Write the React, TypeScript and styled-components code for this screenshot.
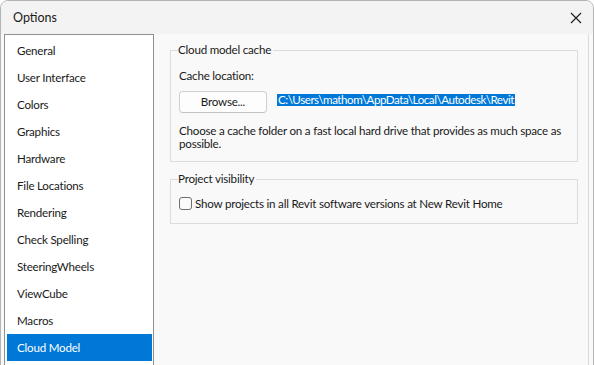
import React from "react";
import styled, { createGlobalStyle } from "styled-components";

const Global = createGlobalStyle`
  html, body { margin: 0; padding: 0; background: #ffffff; }
  body { font-family: "Segoe UI", Lato, "Noto Sans", sans-serif; }
  #root { width: 594px; height: 365px; overflow: hidden; }
`;

const Window = styled.div`
  box-sizing: border-box;
  width: 594px;
  height: 375px;
  border: 1px solid #b4b4b4;
  border-radius: 8px 8px 0 0;
  background: #f9f9f9;
  display: flex;
  flex-direction: column;
  overflow: hidden;
  font-size: 11.6px;
  letter-spacing: -0.22px;
  color: #1a1a1a;
`;

const TitleBar = styled.div`
  height: 33px;
  flex: none;
  background: #f3f3f3;
  display: flex;
  align-items: center;
  justify-content: space-between;
  padding: 0 10px 0 12px;
  font-size: 12.5px;
  letter-spacing: 0;
  color: #1b1b1b;
`;

const CloseButton = styled.div`
  width: 14px;
  height: 14px;
  display: flex;
  align-items: center;
  justify-content: center;
`;

const Body = styled.div`
  flex: 1;
  display: flex;
  padding: 0 4px 0 3px;
  gap: 4px;
`;

const ListBox = styled.div`
  box-sizing: border-box;
  width: 150px;
  flex: none;
  background: #ffffff;
  border: 1px solid #8f8f8f;
  padding: 2px 1px 0 2px;
  display: flex;
  flex-direction: column;
`;

const ListItem = styled.div<{ $selected?: boolean }>`
  height: 27px;
  display: flex;
  align-items: center;
  padding-left: 10px;
  background: ${(p) => (p.$selected ? "#0078d7" : "transparent")};
  color: ${(p) => (p.$selected ? "#ffffff" : "#1a1a1a")};
`;

const Panel = styled.div`
  flex: 1;
  border-right: 1px solid #dadada;
  padding: 8px 10px 0 12px;
  display: flex;
  flex-direction: column;
  gap: 9px;
`;

const Group = styled.fieldset<{ $bottom: number }>`
  margin: 0;
  min-width: 0;
  border: 1px solid #dcdcdc;
  border-radius: 0;
  padding: 0 8px ${(p) => p.$bottom}px 8px;
  display: flex;
  flex-direction: column;
`;

const Legend = styled.legend`
  padding: 0 2px 0 0;
  margin-left: -1px;
  line-height: 16px;
`;

const Label = styled.div`
  line-height: 15px;
  margin-top: 10px;
`;

const BrowseRow = styled.div`
  display: flex;
  align-items: center;
  gap: 10px;
  margin-top: 8px;
`;

const Button = styled.div`
  box-sizing: border-box;
  width: 88px;
  height: 22px;
  border: 1px solid #d0d0d0;
  border-bottom-color: #c2c2c2;
  border-radius: 4px;
  background: #fdfdfd;
  display: flex;
  align-items: center;
  justify-content: center;
  line-height: 1;
`;

const PathText = styled.span`
  background: #0078d7;
  color: #ffffff;
  line-height: 12px;
  letter-spacing: -0.46px;
  padding: 0 1px;
  margin-top: -4px;
`;

const Description = styled.div`
  margin-top: 11px;
  line-height: 13px;
`;

const CheckRow = styled.label`
  display: flex;
  align-items: center;
  gap: 3px;
  margin-top: 9px;
  line-height: 15px;
`;

const CheckBox = styled.span`
  box-sizing: border-box;
  width: 13px;
  height: 13px;
  border: 1px solid #6e6e6e;
  border-radius: 3px;
  background: #fbfbfb;
`;

const items = [
  "General",
  "User Interface",
  "Colors",
  "Graphics",
  "Hardware",
  "File Locations",
  "Rendering",
  "Check Spelling",
  "SteeringWheels",
  "ViewCube",
  "Macros",
  "Cloud Model",
];

export default function App() {
  return (
    <>
      <Global />
      <Window>
        <TitleBar>
          <span>Options</span>
          <CloseButton>
            <svg width="12" height="12" viewBox="0 0 12 12">
              <path d="M1 1 L11 11 M11 1 L1 11" stroke="#1b1b1b" strokeWidth="1.1" fill="none" />
            </svg>
          </CloseButton>
        </TitleBar>
        <Body>
          <ListBox>
            {items.map((it) => (
              <ListItem key={it} $selected={it === "Cloud Model"}>
                {it}
              </ListItem>
            ))}
          </ListBox>
          <Panel>
            <Group $bottom={11}>
              <Legend>Cloud model cache</Legend>
              <Label>Cache location:</Label>
              <BrowseRow>
                <Button>Browse...</Button>
                <PathText>C:\Users\mathom\AppData\Local\Autodesk\Revit</PathText>
              </BrowseRow>
              <Description>
                Choose a cache folder on a fast local hard drive that provides as much space as possible.
              </Description>
            </Group>
            <Group $bottom={12}>
              <Legend>Project visibility</Legend>
              <CheckRow>
                <CheckBox />
                <span>Show projects in all Revit software versions at New Revit Home</span>
              </CheckRow>
            </Group>
          </Panel>
        </Body>
      </Window>
    </>
  );
}
